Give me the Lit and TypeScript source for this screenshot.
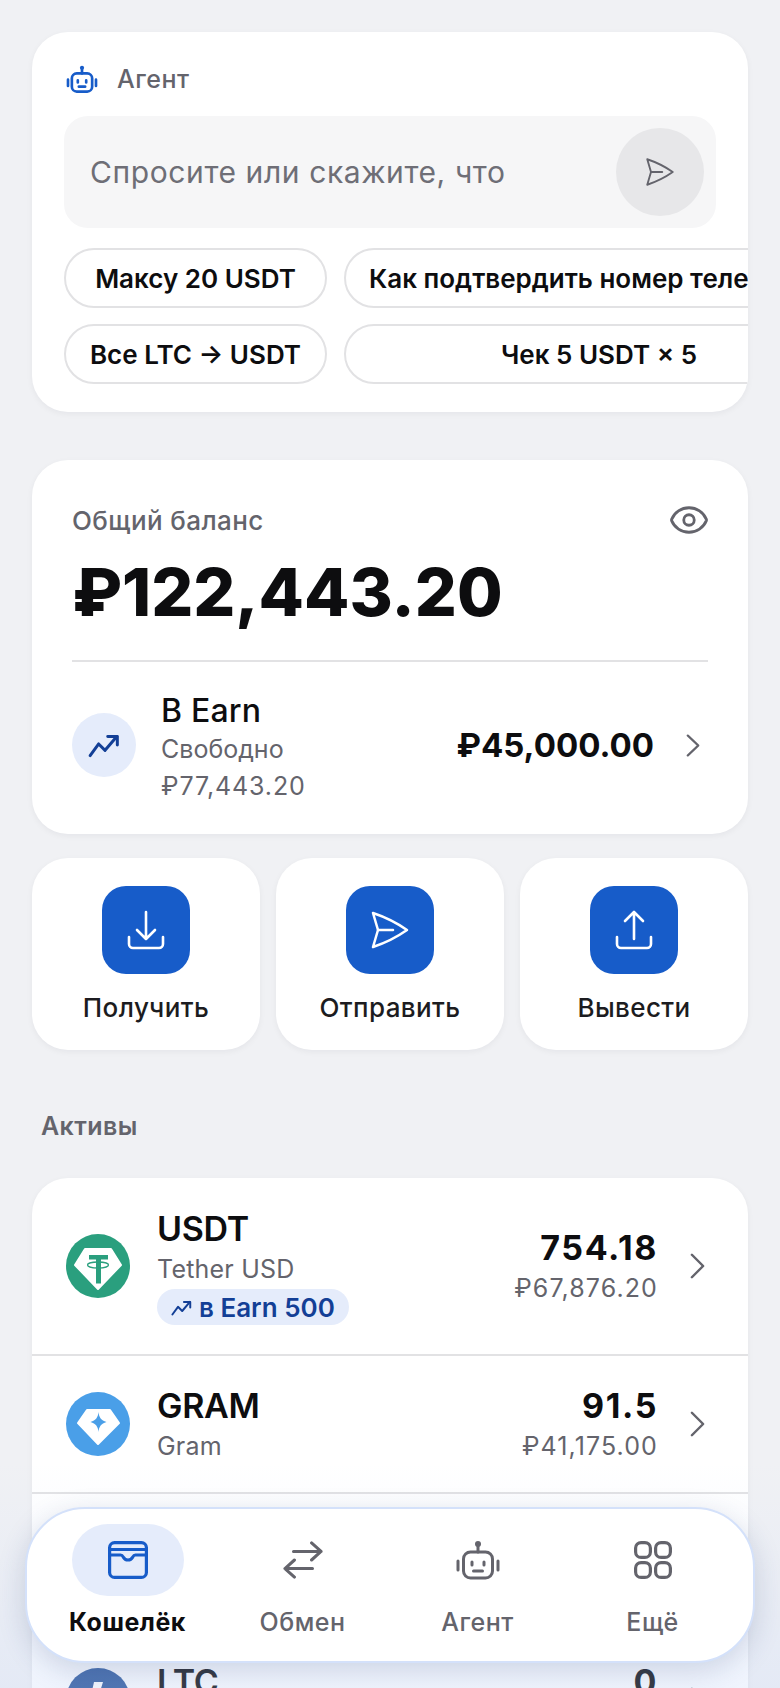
import { LitElement, html, css, svg } from "lit";
import { customElement } from "lit/decorators.js";

const robot = html`<svg class="ico-robot" viewBox="0 0 44 40" fill="none" stroke="currentColor" stroke-width="3" stroke-linecap="round" stroke-linejoin="round">
  <circle cx="22" cy="4" r="3" fill="currentColor" stroke="none"></circle>
  <path d="M22 5v7"></path>
  <rect x="7.500" y="12" width="29" height="26" rx="7"></rect>
  <path d="M2 21v9M42 21v9"></path>
  <path d="M16 22v3M28 22v3"></path>
  <path d="M17.500 31h9"></path>
</svg>`;

const plane = html`<svg class="ico-40" viewBox="0 0 40 40" fill="none" stroke="currentColor" stroke-width="2.500" stroke-linecap="round" stroke-linejoin="round">
  <path d="M3 3 C15 7 27 13 37 20 C27 27 15 33 3 37 L8 20 Z"></path>
  <path d="M8 20h15"></path>
</svg>`;

const eye = html`<svg class="ico-eye" viewBox="0 0 24 24" fill="none" stroke="currentColor" stroke-width="1.600" stroke-linecap="round" stroke-linejoin="round">
  <path d="M2.062 12.348a1 1 0 0 1 0-.696 10.750 10.750 0 0 1 19.876 0 1 1 0 0 1 0 .696 10.750 10.750 0 0 1-19.876 0"></path>
  <circle cx="12" cy="12" r="3"></circle>
</svg>`;

const trend = html`<svg class="ico-trend" viewBox="0 0 30 24" fill="none" stroke="currentColor" stroke-width="2.800" stroke-linecap="round" stroke-linejoin="round">
  <path d="M2 22 L10 11 L16 17 L27 4"></path>
  <path d="M18.500 4h9v8"></path>
</svg>`;

const chevron = html`<svg class="ico-chev" viewBox="0 0 16 30" preserveAspectRatio="none" fill="none" stroke="currentColor" stroke-width="2.600" stroke-linecap="round" stroke-linejoin="round">
  <path d="M2 2 L14 15 L2 28"></path>
</svg>`;

const down = html`<svg class="ico-40" viewBox="0 0 40 40" fill="none" stroke="currentColor" stroke-width="2.600" stroke-linecap="round" stroke-linejoin="round">
  <path d="M20 2v27M11 20l9 9 9-9"></path>
  <path d="M3 27v7a4 4 0 0 0 4 4h26a4 4 0 0 0 4-4v-7"></path>
</svg>`;

const up = html`<svg class="ico-40" viewBox="0 0 40 40" fill="none" stroke="currentColor" stroke-width="2.600" stroke-linecap="round" stroke-linejoin="round">
  <path d="M20 29V2M11 11l9-9 9 9"></path>
  <path d="M3 27v7a4 4 0 0 0 4 4h26a4 4 0 0 0 4-4v-7"></path>
</svg>`;

const wallet = html`<svg class="nav-ico" viewBox="0 0 40 38" fill="none" stroke="currentColor" stroke-width="3.200" stroke-linecap="round" stroke-linejoin="round">
  <rect x="1.600" y="1.600" width="36.800" height="34.800" rx="5"></rect>
  <path d="M1.600 8.500h36.800"></path>
  <path d="M1.600 14h11c1.500 0 2 .8 2.800 2.200 1 1.900 2.500 2.800 4.600 2.800s3.600-.9 4.600-2.800c.8-1.400 1.300-2.200 2.800-2.200h11"></path>
</svg>`;

const swap = html`<svg class="nav-ico" viewBox="0 0 40 40" fill="none" stroke="currentColor" stroke-width="3.200" stroke-linecap="round" stroke-linejoin="round">
  <path d="M10 11h29M29 2l10 9-10 9"></path>
  <path d="M30 29H1M11 20 1 29l10 9"></path>
</svg>`;

const grid = html`<svg class="nav-ico" viewBox="0 0 38 38" fill="none" stroke="currentColor" stroke-width="3.200">
  <rect x="1.600" y="1.600" width="14.800" height="14.800" rx="5.500"></rect>
  <rect x="21.600" y="1.600" width="14.800" height="14.800" rx="5.500"></rect>
  <rect x="1.600" y="21.600" width="14.800" height="14.800" rx="5.500"></rect>
  <rect x="21.600" y="21.600" width="14.800" height="14.800" rx="5.500"></rect>
</svg>`;

const tether = svg`<svg class="coin" viewBox="0 0 64 64">
  <circle cx="32" cy="32" r="32" fill="#2a9f7e"></circle>
  <path d="M19 15h26l10 16-23 24L9 31z" fill="#fff" stroke="#fff" stroke-width="2" stroke-linejoin="round"></path>
  <path d="M23 21h19v4.500h-7v24h-5v-24h-7z" fill="#2a9f7e"></path>
  <ellipse cx="32" cy="31" rx="10.500" ry="3" fill="none" stroke="#2a9f7e" stroke-width="1.300"></ellipse>
</svg>`;

const gram = svg`<svg class="coin" viewBox="0 0 64 64">
  <circle cx="32" cy="32" r="32" fill="#4a9fe8"></circle>
  <path d="M21 18h23l9 13-21 21-20-21z" fill="#fff" stroke="#fff" stroke-width="2" stroke-linejoin="round"></path>
  <path d="M36 20c.6 5.500 2.500 8.200 8 10-5.500 1.800-7.400 4.500-8 10-.6-5.500-2.500-8.200-8-10 5.500-1.800 7.400-4.500 8-10z" transform="translate(-3.500 0)" fill="#4a9fe8"></path>
</svg>`;

const ton = svg`<svg class="coin" viewBox="0 0 64 64">
  <circle cx="32" cy="32" r="32" fill="#2d8fe0"></circle>
</svg>`;

const ltc = svg`<svg class="coin" viewBox="0 0 64 64">
  <circle cx="32" cy="32" r="32" fill="#2f5a9e"></circle>
  <path d="M28 14h9l-5 16 6-2-2 7-6 2-3 10h20l-2 7H17l5-15-5 2 2-7 5-2z" fill="#fff"></path>
</svg>`;

interface Asset { sym: string; name: string; qty: string; fiat: string; icon: unknown; earn?: string; }

const assets: Asset[] = [
  { sym: "USDT", name: "Tether USD", qty: "754.18", fiat: "₽67,876.20", icon: tether, earn: "в Earn 500" },
  { sym: "GRAM", name: "Gram", qty: "91.5", fiat: "₽41,175.00", icon: gram },
  { sym: "TON", name: "Toncoin", qty: "12", fiat: "₽13,392.00", icon: ton },
  { sym: "LTC", name: "Litecoin", qty: "0", fiat: "₽0.00", icon: ltc },
];

const tabs = [
  { label: "Кошелёк", icon: wallet, active: true },
  { label: "Обмен", icon: swap },
  { label: "Агент", icon: robot },
  { label: "Ещё", icon: grid },
];

@customElement("app-root")
export class AppRoot extends LitElement {
  static styles = css`
    :host {
      display: block;
      position: relative;
      width: 780px;
      height: 1688px;
      overflow: hidden;
      background: #f0f1f4;
      font-family: Inter, "Noto Sans", sans-serif;
      color: #0d0d0f;
    }
    * { box-sizing: border-box; }
    svg { display: block; flex: none; }
    .ico-40 { width: 40px; height: 40px; }
    .page {
      display: flex;
      flex-direction: column;
      padding: 32px 32px 0;
    }
    .card {
      background: #fff;
      border-radius: 36px;
      box-shadow: 0 2px 6px rgba(20, 24, 40, 0.05);
    }
    .agent {
      height: 380px;
      padding: 32px 0 0 32px;
      overflow: hidden;
    }
    .agent-head {
      display: flex;
      align-items: center;
      gap: 19px;
      height: 30px;
      color: #64646c;
      font-size: 25px;
      font-weight: 500;
      letter-spacing: 0.5px;
    }
    .agent-head .ico-robot { width: 32px; height: 28px; color: #175cc9; margin-left: 2px; stroke-width: 3.800; }
    .ask {
      display: flex;
      align-items: center;
      justify-content: space-between;
      width: 652px;
      height: 112px;
      margin-top: 22px;
      padding: 0 12px 0 26px;
      border-radius: 24px;
      background: #f6f6f7;
      color: #6e6e76;
      font-size: 30px;
      letter-spacing: 0.6px;
    }
    .send {
      display: flex;
      align-items: center;
      justify-content: center;
      width: 88px;
      height: 88px;
      border-radius: 50%;
      background: #e7e7e9;
      color: #64646c;
    }
    .send .ico-40 { width: 30px; height: 30px; }
    .chips {
      display: grid;
      grid-template-columns: 263px 510px;
      gap: 16px 17px;
      margin-top: 20px;
    }
    .chip {
      display: flex;
      align-items: center;
      justify-content: center;
      height: 60px;
      border: 2px solid #e2e2e4;
      border-radius: 30px;
      background: #fff;
      font-size: 26px;
      font-weight: 600;
      white-space: nowrap;
    }
    .balance {
      height: 374px;
      margin-top: 48px;
      padding: 44px 40px 0;
    }
    .bal-top {
      display: flex;
      align-items: center;
      justify-content: space-between;
      height: 32px;
      color: #64646c;
      font-size: 26px;
      font-weight: 500;
      letter-spacing: 0.4px;
    }
    .bal-top .ico-eye { width: 42px; height: 42px; margin-right: -2px; }
    .total {
      margin-top: 11px;
      height: 90px;
      line-height: 90px;
      font-size: 66px;
      font-weight: 800;
    }
    .divider { height: 2px; margin-top: 23px; background: #e2e2e4; }
    .earn {
      display: flex;
      align-items: center;
      margin-top: 23px;
    }
    .earn-ico {
      display: flex;
      align-items: center;
      justify-content: center;
      width: 64px;
      height: 64px;
      border-radius: 50%;
      background: #e5ecfb;
      color: #133f96;
    }
    .earn-ico .ico-trend { width: 32px; height: 26px; }
    .earn-text { margin-left: 25px; flex: 1; padding-top: 6px; }
    .earn-title { font-size: 32px; font-weight: 500; line-height: 40px; letter-spacing: 0.2px; }
    .sub { color: #64646c; font-size: 25px; line-height: 37px; }
    .sub.num { letter-spacing: 0.9px; }
    .earn-amt { font-size: 33px; font-weight: 700; }
    .ico-chev { color: #64646c; }
    .earn .ico-chev { width: 14px; height: 23px; margin-left: 32px; margin-right: 8px; }
    .actions {
      display: grid;
      grid-template-columns: repeat(3, 228px);
      gap: 16px;
      margin-top: 24px;
    }
    .action {
      display: flex;
      flex-direction: column;
      align-items: center;
      height: 192px;
      padding-top: 28px;
      border-radius: 36px;
      background: #fff;
      box-shadow: 0 2px 6px rgba(20, 24, 40, 0.05);
      font-size: 26px;
      font-weight: 500;
      letter-spacing: 0.4px;
      color: #1c1c20;
    }
    .action-ico {
      display: flex;
      align-items: center;
      justify-content: center;
      width: 88px;
      height: 88px;
      margin-bottom: 18px;
      border-radius: 24px;
      background: #175cc9;
      color: #fff;
    }
    .section {
      margin: 58px 0 0 9px;
      height: 36px;
      line-height: 36px;
      color: #64646c;
      font-size: 25px;
      font-weight: 600;
      letter-spacing: 0.4px;
    }
    .list {
      margin-top: 34px;
      overflow: hidden;
    }
    .row {
      display: flex;
      align-items: center;
      height: 138px;
      padding: 0 43px 0 34px;
      border-bottom: 2px solid #e2e2e4;
    }
    .row.tall { height: 178px; }
    .coin { width: 64px; height: 64px; }
    .row-text { margin-left: 27px; flex: 1; }
    .row-sym { font-size: 34px; font-weight: 600; line-height: 44px; letter-spacing: -0.3px; }
    .row-name { color: #64646c; font-size: 25px; line-height: 36px; letter-spacing: 0.2px; }
    .pill {
      display: inline-flex;
      align-items: center;
      gap: 7px;
      height: 36px;
      margin-top: 2px;
      padding: 0 14px;
      border-radius: 18px;
      background: #e5ecfb;
      color: #133f96;
      font-size: 26px;
      font-weight: 600;
    }
    .pill .ico-trend { width: 21px; height: 17px; }
    .row-right { text-align: right; }
    .row-qty { font-size: 34px; font-weight: 700; line-height: 44px; letter-spacing: 1.6px; }
    .row-fiat { color: #64646c; font-size: 25px; line-height: 36px; letter-spacing: 1.1px; }
    .row .ico-chev { width: 15px; height: 26px; margin-left: 32px; }
    .fade {
      position: absolute;
      left: 0;
      right: 0;
      bottom: 0;
      height: 225px;
      background: linear-gradient(to bottom, rgba(190, 210, 250, 0), rgba(190, 210, 250, 0.24));
      pointer-events: none;
    }
    .nav {
      position: absolute;
      left: 25px;
      top: 1507px;
      display: grid;
      grid-template-columns: repeat(4, 175px);
      width: 730px;
      height: 156px;
      padding: 15px 13px 0;
      border: 2px solid #d4e1fa;
      border-radius: 60px;
      background: #fff;
      box-shadow: 0 8px 28px rgba(40, 60, 110, 0.18);
    }
    .tab {
      display: flex;
      flex-direction: column;
      align-items: center;
      color: #64646c;
      font-size: 25px;
      font-weight: 500;
      letter-spacing: 0.5px;
    }
    .tab.on { color: #0d0d0f; font-weight: 700; }
    .tab-ico {
      display: flex;
      align-items: center;
      justify-content: center;
      width: 112px;
      height: 72px;
      border-radius: 36px;
      margin-bottom: 11px;
    }
    .tab.on .tab-ico { background: #e5ecfb; color: #175cc9; }
    .nav-ico { width: 40px; height: 38px; }
    .tab .ico-robot { width: 44px; height: 40px; }
  `;

  render() {
    return html`
      <div class="page">
        <section class="card agent">
          <div class="agent-head">${robot}<span>Агент</span></div>
          <div class="ask"><span>Спросите или скажите, что</span><div class="send">${plane}</div></div>
          <div class="chips">
            <div class="chip">Максу 20 USDT</div>
            <div class="chip">Как подтвердить номер телефона?</div>
            <div class="chip">Все LTC → USDT</div>
            <div class="chip">Чек 5 USDT × 5</div>
          </div>
        </section>

        <section class="card balance">
          <div class="bal-top"><span>Общий баланс</span>${eye}</div>
          <div class="total">₽122,443.20</div>
          <div class="divider"></div>
          <div class="earn">
            <div class="earn-ico">${trend}</div>
            <div class="earn-text">
              <div class="earn-title">В Earn</div>
              <div class="sub">Свободно</div>
              <div class="sub num">₽77,443.20</div>
            </div>
            <div class="earn-amt">₽45,000.00</div>
            ${chevron}
          </div>
        </section>

        <div class="actions">
          <div class="action"><div class="action-ico">${down}</div>Получить</div>
          <div class="action"><div class="action-ico">${plane}</div>Отправить</div>
          <div class="action"><div class="action-ico">${up}</div>Вывести</div>
        </div>

        <div class="section">Активы</div>

        <section class="card list">
          ${assets.map(
            (a) => html`
              <div class="row ${a.earn ? "tall" : ""}">
                ${a.icon}
                <div class="row-text">
                  <div class="row-sym">${a.sym}</div>
                  <div class="row-name">${a.name}</div>
                  ${a.earn ? html`<div class="pill">${trend}${a.earn}</div>` : ""}
                </div>
                <div class="row-right">
                  <div class="row-qty">${a.qty}</div>
                  <div class="row-fiat">${a.fiat}</div>
                </div>
                ${chevron}
              </div>
            `
          )}
        </section>
      </div>

      <div class="fade"></div>
      <nav class="nav">
        ${tabs.map(
          (t) => html`<div class="tab ${t.active ? "on" : ""}"><div class="tab-ico">${t.icon}</div>${t.label}</div>`
        )}
      </nav>
    `;
  }
}
